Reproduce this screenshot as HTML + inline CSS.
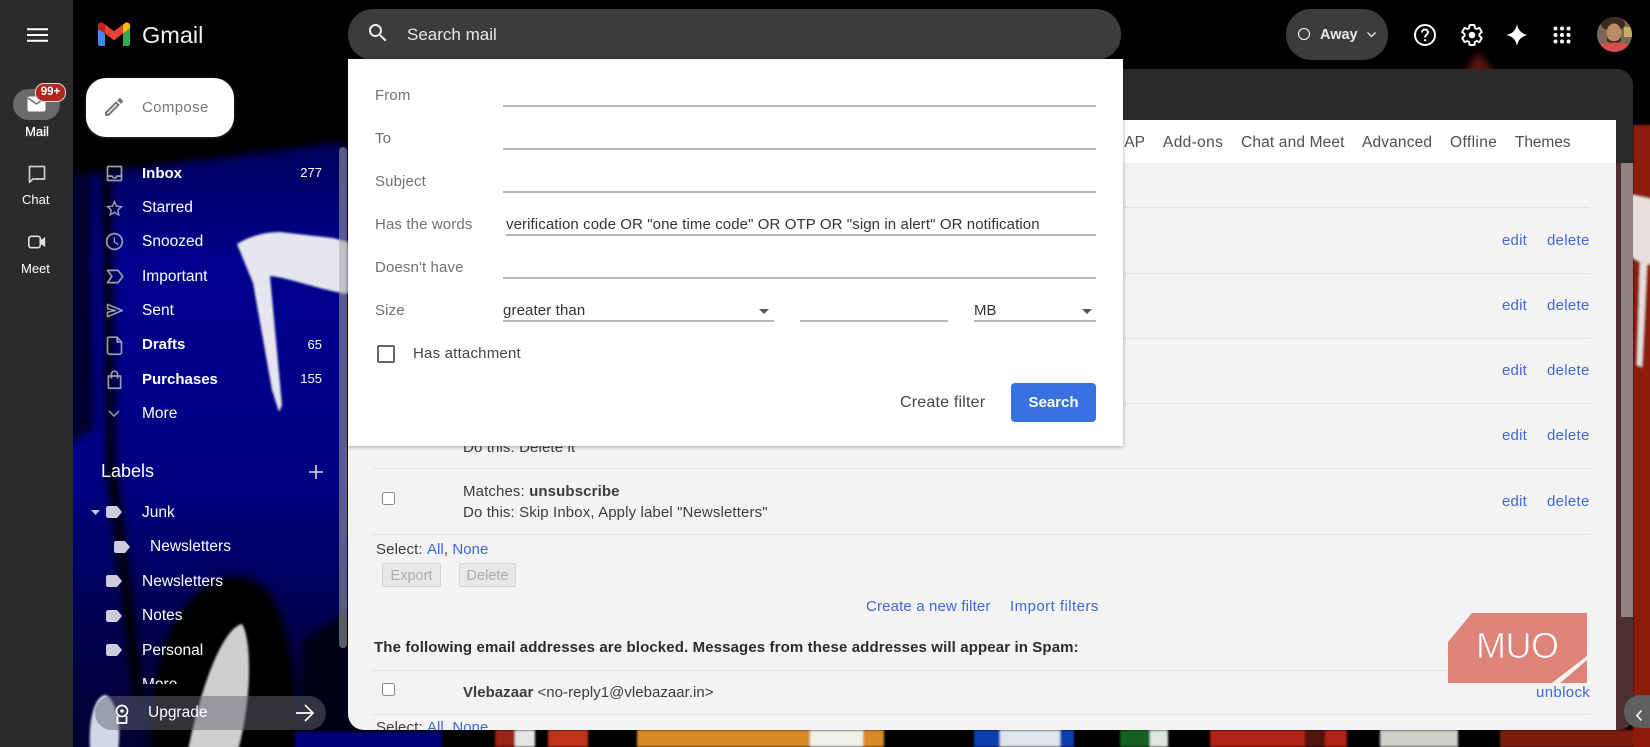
<!DOCTYPE html>
<html>
<head>
<meta charset="utf-8">
<title>Gmail</title>
<style>
html,body{margin:0;padding:0;background:#000;}
body{width:1650px;height:747px;overflow:hidden;position:relative;font-family:"Liberation Sans",sans-serif;font-size:15px;}
.a{position:absolute;}
.t{position:absolute;line-height:20px;height:20px;white-space:nowrap;}
.w{color:#fff;}
.b{font-weight:bold;}
.nav{color:#fff;font-size:15.5px;left:142px;}
.nav.b{font-size:15px;}
.cnt{color:#fff;font-size:13px;right:1328px;}
.lab{color:#727272;font-size:15px;left:375px;letter-spacing:.12px;}
.ln{position:absolute;height:2px;background:#b8b8b8;}
.rl{position:absolute;left:373px;width:1217px;height:1px;background:#e3e2e2;}
.lk{color:#3f67d5;font-size:15px;letter-spacing:.2px;}
.sl{letter-spacing:.05px;}
.tx{color:#3c3c3c;font-size:15px;letter-spacing:.12px;}
.tab{color:#4f4f4f;font-size:15.5px;top:133px;}
.cb{position:absolute;width:11px;height:11px;border:1.5px solid #888;border-radius:2.5px;background:#fff;}
.dis{position:absolute;height:22px;line-height:24px;background:#e9e8e8;border:1px solid #d4d4d4;border-radius:2px;color:#aaa;font-size:14.5px;text-align:center;}
svg.i{position:absolute;overflow:visible;}
</style>
</head>
<body>
<!-- wallpaper -->
<svg class="a" style="left:0;top:0" width="1650" height="747" viewBox="0 0 1650 747">
<defs>
<linearGradient id="bl" gradientUnits="userSpaceOnUse" x1="0" y1="145" x2="0" y2="747">
<stop offset="0" stop-color="#00005c"/><stop offset=".2" stop-color="#05058e"/><stop offset=".55" stop-color="#040484"/><stop offset=".8" stop-color="#020250"/><stop offset="1" stop-color="#010130"/>
</linearGradient>
<filter id="f4" filterUnits="userSpaceOnUse" x="0" y="0" width="1650" height="747"><feGaussianBlur stdDeviation="4"/></filter>
<filter id="f1" filterUnits="userSpaceOnUse" x="0" y="0" width="1650" height="747"><feGaussianBlur stdDeviation="1"/></filter>
</defs>
<rect width="1650" height="747" fill="#000"/>
<g filter="url(#f4)">
<path d="M60 178 L200 160 L335 143 L360 150 L360 700 L300 760 L60 760Z" fill="url(#bl)"/>
<path d="M60 178 L92 172 L95 430 L60 450Z" fill="#01012e"/>
<path d="M100 170 L113 170 L118 460 L146 700 L132 700 L104 470Z" fill="#000"/>
<path d="M150 760 C140 660 180 574 236 574 C290 574 298 660 300 760Z" fill="#000"/>
<path d="M300 640 L360 600 L360 760 L300 760Z" fill="#010118"/>
<path d="M1465 72 L1478 52 L1530 115 L1500 120Z" fill="#5a140c"/>
</g>
<g filter="url(#f1)">
<path d="M188 750 C200 690 222 628 242 624 C252 640 252 700 238 750Z" fill="#cfcfcf"/>
<path d="M90 750 C88 715 96 695 106 695 C116 700 122 725 118 750Z" fill="#cfd9e6"/>
<path d="M237 244 C250 236 265 232 280 232 L333 238 L348 242 L348 294 C320 290 290 278 270 276 L282 405 L279 412 L272 390 L253 283 Z" fill="#e6e6ee"/>
<rect x="295" y="732" width="147" height="16" fill="#03037a"/>
<rect x="495" y="730" width="20" height="17" fill="#9a2018"/>
<rect x="515" y="730" width="20" height="17" fill="#e5e5e5"/>
<rect x="548" y="730" width="40" height="17" fill="#c03018"/>
<rect x="637" y="730" width="247" height="17" fill="#d98a25"/>
<rect x="810" y="730" width="53" height="17" fill="#f0f0e8"/>
<rect x="974" y="730" width="26" height="17" fill="#1040b0"/>
<rect x="1000" y="730" width="60" height="17" fill="#dfe6ee"/>
<rect x="1060" y="730" width="14" height="17" fill="#1040b0"/>
<rect x="1120" y="730" width="30" height="17" fill="#156020"/>
<rect x="1150" y="730" width="18" height="17" fill="#dde8dd"/>
<rect x="1210" y="730" width="137" height="17" fill="#b02415"/>
<rect x="1305" y="730" width="20" height="17" fill="#501510"/>
<rect x="1380" y="730" width="78" height="17" fill="#cfcfc8"/>
<rect x="1500" y="730" width="150" height="17" fill="#7d1a10"/>
<path d="M1633 125H1655V752H1633Z" fill="#8e1b10"/>
<path d="M1600 192 C1620 192 1640 196 1655 200 L1655 262 L1647 265 L1642 367 L1637 365 L1640 262 L1600 240Z" fill="#e6dfdc"/>
</g>
</svg>

<!-- left rail -->
<div class="a" style="left:0;top:0;width:73px;height:747px;background:#2b2b2b"></div>
<svg class="i" style="left:27px;top:28px" width="21" height="14"><path d="M0 1.2H21M0 7H21M0 12.8H21" stroke="#fff" stroke-width="2"/></svg>
<div class="a" style="left:13px;top:89px;width:47px;height:31px;border-radius:16px;background:#6a6a6a"></div>
<svg class="i" style="left:27px;top:96px" width="20" height="16" viewBox="0 0 20 16"><rect x="0.5" y="0.5" width="18" height="15" rx="2" fill="#fff"/><path d="M1 2l8.5 6L18 2" fill="none" stroke="#6a6a6a" stroke-width="1.5"/></svg>
<div class="a" style="left:35px;top:83px;width:29px;height:17px;line-height:17px;border-radius:9px;background:#b3261e;border:1px solid #ddd;color:#fff;font-size:11.5px;font-weight:bold;text-align:center">99+</div>
<div class="t w" style="left:24px;top:122px;font-size:13px;width:26px;text-align:center;-webkit-text-stroke:.3px #fff">Mail</div>
<svg class="i" style="left:27px;top:164px" width="20" height="20" viewBox="0 0 24 24"><path d="M3 3H21V18H7L3 22Z" fill="none" stroke="#d0d0d0" stroke-width="2" stroke-linejoin="round"/></svg>
<div class="t w" style="left:22px;top:190px;font-size:13px">Chat</div>
<svg class="i" style="left:27px;top:233px" width="20" height="18" viewBox="0 0 24 22"><rect x="2" y="4" width="14" height="14" rx="3" fill="none" stroke="#e0e0e0" stroke-width="2"/><path d="M16 9l6-4V17l-6-4Z" fill="#e0e0e0"/></svg>
<div class="t w" style="left:21px;top:259px;font-size:13px">Meet</div>

<!-- logo -->
<svg class="i" style="left:98px;top:22px" width="32" height="24" viewBox="0 0 32 24">
<path d="M2 24h5V11.5L0 6.5V22c0 1.1.9 2 2 2z" fill="#4285f4"/>
<path d="M25 24h5c1.1 0 2-.9 2-2V6.5l-7 5z" fill="#34a853"/>
<path d="M25 2.5V11.5l7-5V3.5c0-2.6-3-4-5-2.5z" fill="#fbbc04"/>
<path d="M7 11.5V2.5l9 6.75 9-6.75v9l-9 6.75z" fill="#ea4335"/>
<path d="M0 3.5v3l7 5V2.5L5 1C3 -.5 0 .9 0 3.5z" fill="#c5221f"/>
</svg>
<div class="t" style="left:142px;top:23px;font-size:23.5px;line-height:24px;height:24px;color:#f1f1f1">Gmail</div>

<!-- compose -->
<div class="a" style="left:86px;top:78px;width:148px;height:59px;background:#fff;border-radius:20px;box-shadow:0 1px 3px rgba(255,255,255,.2)"></div>
<svg class="i" style="left:102px;top:95px" width="24" height="24" viewBox="0 0 24 24"><path d="M14.06 9.02l.92.92L5.92 19H5v-.92l9.06-9.06M17.66 3c-.25 0-.51.1-.7.29l-1.83 1.83 3.75 3.75 1.83-1.83c.39-.39.39-1.02 0-1.41l-2.34-2.34c-.2-.2-.45-.29-.71-.29zm-3.6 3.19L3 17.25V21h3.75L17.81 9.94l-3.75-3.75z" fill="#777"/></svg>
<div class="t" style="left:142px;top:98px;font-size:15px;color:#777;letter-spacing:.35px">Compose</div>

<!-- nav -->
<svg class="i" style="left:103.5px;top:162.5px" width="21" height="21" viewBox="0 0 24 24"><path d="M19 3H5c-1.1 0-2 .9-2 2v14c0 1.1.9 2 2 2h14c1.1 0 2-.9 2-2V5c0-1.1-.9-2-2-2zm0 16H5v-3h3.56c.69 1.19 1.97 2 3.45 2s2.75-.81 3.45-2H19v3zm0-5h-4.99c0 1.1-.9 2-2 2s-2-.9-2-2H5V5h14v9z" fill="#9c9ca8"/></svg>
<svg class="i" style="left:103.5px;top:198px" width="21" height="21" viewBox="0 0 24 24"><path d="M22 9.24l-7.19-.62L12 2 9.19 8.63 2 9.24l5.46 4.73L5.82 21 12 17.27 18.18 21l-1.63-7.03L22 9.24zM12 15.4l-3.76 2.27 1-4.28-3.32-2.88 4.38-.38L12 6.1l1.71 4.04 4.38.38-3.32 2.88 1 4.28L12 15.4z" fill="#9c9ca8"/></svg>
<svg class="i" style="left:103.5px;top:231px" width="21" height="21" viewBox="0 0 24 24"><path d="M11.99 2C6.47 2 2 6.48 2 12s4.47 10 9.99 10C17.52 22 22 17.52 22 12S17.52 2 11.99 2zM12 20c-4.42 0-8-3.58-8-8s3.58-8 8-8 8 3.58 8 8-3.58 8-8 8zm.5-13H11v6l5.25 3.15.75-1.23-4.5-2.67z" fill="#9c9ca8"/></svg>
<svg class="i" style="left:103.5px;top:266px" width="21" height="21" viewBox="0 0 24 24"><path d="M4 5H16L21.5 12 16 19H4L9 12Z" fill="none" stroke="#9c9ca8" stroke-width="2" stroke-linejoin="round"/></svg>
<svg class="i" style="left:103.5px;top:300px" width="21" height="21" viewBox="0 0 24 24"><path d="M4 5L21 12 4 19V14L13 12 4 10Z" fill="none" stroke="#9c9ca8" stroke-width="1.8" stroke-linejoin="round"/></svg>
<svg class="i" style="left:103.5px;top:335px" width="21" height="21" viewBox="0 0 24 24"><path d="M6 2.5H15L20 8V20C20 21 19 22 18 22H6C5 22 4 21 4 20V4C4 3 5 2.5 6 2.5Z M15 2.5V8H20" fill="none" stroke="#9c9ca8" stroke-width="1.9"/></svg>
<svg class="i" style="left:103.5px;top:369px" width="21" height="21" viewBox="0 0 24 24"><path d="M5 8H19V22H5Z M8.5 11V6A3.5 3.5 0 0 1 15.5 6V11" fill="none" stroke="#9c9ca8" stroke-width="1.9" stroke-linejoin="round"/></svg>
<svg class="i" style="left:108px;top:410px" width="12" height="8"><path d="M1 1L6 6L11 1" fill="none" stroke="#9c9ca8" stroke-width="1.5"/></svg>

<div class="t nav b" style="top:164px">Inbox</div><div class="t cnt" style="top:163px">277</div>
<div class="t nav" style="top:198px">Starred</div>
<div class="t nav" style="top:232px">Snoozed</div>
<div class="t nav" style="top:267px">Important</div>
<div class="t nav" style="top:301px">Sent</div>
<div class="t nav b" style="top:335px">Drafts</div><div class="t cnt" style="top:335px">65</div>
<div class="t nav b" style="top:370px">Purchases</div><div class="t cnt" style="top:369px">155</div>
<div class="t nav" style="top:404px">More</div>
<div class="t w" style="left:101px;top:461px;font-size:18px">Labels</div>
<svg class="i" style="left:309px;top:465px" width="14" height="14"><path d="M7 0V14M0 7H14" stroke="#ddd" stroke-width="1.6"/></svg>

<svg class="i" style="left:91px;top:510px" width="10" height="5"><path d="M0 0H9L4.5 5Z" fill="#c8c8d8"/></svg>
<svg class="i" style="left:106px;top:506px" width="16" height="12"><path d="M2 0H11L16 6L11 12H2C1 12 0 11 0 10V2C0 1 1 0 2 0Z" fill="#cdcddd"/></svg>
<svg class="i" style="left:114px;top:541px" width="16" height="12"><path d="M2 0H11L16 6L11 12H2C1 12 0 11 0 10V2C0 1 1 0 2 0Z" fill="#cdcddd"/></svg>
<svg class="i" style="left:106px;top:575px" width="16" height="12"><path d="M2 0H11L16 6L11 12H2C1 12 0 11 0 10V2C0 1 1 0 2 0Z" fill="#cdcddd"/></svg>
<svg class="i" style="left:106px;top:610px" width="16" height="12"><path d="M2 0H11L16 6L11 12H2C1 12 0 11 0 10V2C0 1 1 0 2 0Z" fill="#cdcddd"/></svg>
<svg class="i" style="left:106px;top:644px" width="16" height="12"><path d="M2 0H11L16 6L11 12H2C1 12 0 11 0 10V2C0 1 1 0 2 0Z" fill="#cdcddd"/></svg>

<div class="t nav" style="top:503px">Junk</div>
<div class="t nav" style="left:150px;top:537px">Newsletters</div>
<div class="t nav" style="top:572px">Newsletters</div>
<div class="t nav" style="top:606px">Notes</div>
<div class="t nav" style="top:641px">Personal</div>
<div class="a" style="left:100px;top:670px;width:240px;height:14px;overflow:hidden"><div class="t nav" style="left:42px;top:5px">More</div></div>

<div class="a" style="left:95px;top:696px;width:231px;height:34px;border-radius:17px;background:rgba(100,100,112,.5)"></div>
<svg class="i" style="left:114px;top:704px" width="16" height="20" viewBox="0 0 16 20"><circle cx="8" cy="7" r="5.5" fill="none" stroke="#fff" stroke-width="1.7"/><circle cx="8" cy="7" r="1.8" fill="#fff"/><path d="M3.5 12V19H12.5V12" fill="none" stroke="#fff" stroke-width="1.7"/></svg>
<div class="t w" style="left:148px;top:703px;font-size:15.5px">Upgrade</div>
<svg class="i" style="left:296px;top:704px" width="18" height="18"><path d="M0 9H17M9 1L17 9L9 17" fill="none" stroke="#fff" stroke-width="1.7"/></svg>

<div class="a" style="left:339px;top:147px;width:8px;height:501px;border-radius:4px;background:rgba(165,165,165,.55)"></div>

<!-- main panel -->
<div class="a" style="left:348px;top:69px;width:1285px;height:661px;border-radius:16px;background:rgba(43,43,43,.97)"></div>
<div class="a" style="left:1616px;top:163px;width:17px;height:554px;background:#4d2f2d"></div>
<div class="a" style="left:1616px;top:710px;width:17px;height:20px;background:#4d2f2d;border-radius:0 0 14px 0"></div>
<div class="a" style="left:1621px;top:163px;width:12px;height:454px;background:#8f8280"></div>
<div class="a" style="left:348px;top:120px;width:1268px;height:43px;background:#fff"></div>
<div class="a" style="left:348px;top:163px;width:1268px;height:567px;background:#f4f3f3;border-radius:0 0 0 16px;overflow:hidden">
  <div class="t tx sl" style="left:28px;top:555px">Select: <span class="lk sl">All</span>, <span class="lk sl">None</span></div>
</div>

<!-- tabs -->
<div class="t tab" style="left:1120px">IAP</div>
<div class="t tab" style="left:1163px;letter-spacing:.35px">Add-ons</div>
<div class="t tab" style="left:1241px;letter-spacing:.15px">Chat and Meet</div>
<div class="t tab" style="left:1362px;letter-spacing:.15px">Advanced</div>
<div class="t tab" style="left:1450px;letter-spacing:.4px">Offline</div>
<div class="t tab" style="left:1515px;letter-spacing:-.1px">Themes</div>

<!-- rows -->
<div class="rl" style="top:207px"></div>
<div class="rl" style="top:273px"></div>
<div class="rl" style="top:338px"></div>
<div class="rl" style="top:403px"></div>
<div class="rl" style="top:468px"></div>
<div class="rl" style="top:534px"></div>
<div class="rl" style="top:670px"></div>
<div class="rl" style="top:714px"></div>

<div class="t lk" style="left:1502px;top:231px">edit</div><div class="t lk" style="left:1547px;top:231px;letter-spacing:.3px">delete</div>
<div class="t lk" style="left:1502px;top:296px">edit</div><div class="t lk" style="left:1547px;top:296px;letter-spacing:.3px">delete</div>
<div class="t lk" style="left:1502px;top:361px">edit</div><div class="t lk" style="left:1547px;top:361px;letter-spacing:.3px">delete</div>
<div class="t lk" style="left:1502px;top:426px">edit</div><div class="t lk" style="left:1547px;top:426px;letter-spacing:.3px">delete</div>
<div class="t lk" style="left:1502px;top:492px">edit</div><div class="t lk" style="left:1547px;top:492px;letter-spacing:.3px">delete</div>

<div class="t tx" style="left:463px;top:438px">Do this: Delete it</div>
<div class="cb" style="left:382px;top:492px"></div>
<div class="t tx" style="left:463px;top:482px">Matches: <b>unsubscribe</b></div>
<div class="t tx" style="left:463px;top:503px">Do this: Skip Inbox, Apply label "Newsletters"</div>
<div class="t tx sl" style="left:376px;top:540px">Select: <span class="lk sl">All</span>, <span class="lk sl">None</span></div>
<div class="dis" style="left:382px;top:563px;width:57px">Export</div>
<div class="dis" style="left:459px;top:563px;width:55px">Delete</div>
<div class="t lk" style="left:866px;top:597px;letter-spacing:.15px">Create a new filter</div>
<div class="t lk" style="left:1010px;top:597px;letter-spacing:.45px">Import filters</div>
<div class="t b" style="left:374px;top:638px;font-size:15px;color:#2c2c2c;letter-spacing:.12px">The following email addresses are blocked. Messages from these addresses will appear in Spam:</div>
<div class="cb" style="left:382px;top:683px"></div>
<div class="t tx" style="left:463px;top:683px;letter-spacing:.03px"><b>Vlebazaar</b> &lt;no-reply1@vlebazaar.in&gt;</div>
<div class="t lk" style="left:1536px;top:683px;letter-spacing:.35px">unblock</div>

<!-- MUO watermark -->
<svg class="i" style="left:1448px;top:613px" width="140" height="71" viewBox="0 0 140 71">
<path d="M24 0H139V43L104 70H0V29Z" fill="#dd8379"/>
<path d="M139 47V70H112Z" fill="#dd8379"/>
<path d="M139 43V47L112 70H104Z" fill="#f4f3f3"/>
</svg>
<div class="t" style="left:1476px;top:628px;height:36px;line-height:36px;font-size:36px;color:#fff;letter-spacing:-.5px;-webkit-text-stroke:.8px #dd8379">MUO</div>

<!-- toggle -->
<div class="a" style="left:1624px;top:695px;width:30px;height:33px;border-radius:16px 0 0 16px;background:#5f5f5f"></div>
<svg class="i" style="left:1636px;top:710px" width="6" height="11"><path d="M5.5 .5L1 5.5L5.5 10.5" fill="none" stroke="#fff" stroke-width="1.6"/></svg>

<!-- top bar -->
<div class="a" style="left:348px;top:9px;width:773px;height:51px;border-radius:25px;background:#3c3c3c"></div>
<svg class="i" style="left:366px;top:21px" width="24" height="24" viewBox="0 0 24 24"><path d="M15.5 14h-.79l-.28-.27A6.47 6.47 0 0 0 16 9.5 6.5 6.5 0 1 0 9.5 16c1.61 0 3.09-.59 4.23-1.57l.27.28v.79l5 4.99L20.49 19l-4.99-5zm-6 0C7.01 14 5 11.99 5 9.5S7.01 5 9.5 5 14 7.01 14 9.5 11.99 14 9.5 14z" fill="#f0f0f0"/></svg>
<div class="t" style="left:407px;top:25px;font-size:17px;color:#e8e8e8">Search mail</div>

<div class="a" style="left:1286px;top:9px;width:102px;height:51px;border-radius:25px;background:#3c3c3c"></div>
<div class="a" style="left:1298px;top:28px;width:10px;height:10px;border:1.8px solid #fff;border-radius:50%"></div>
<div class="t b" style="left:1320px;top:25px;font-size:14.5px;color:#e8e8e8">Away</div>
<svg class="i" style="left:1367px;top:32px" width="9" height="6"><path d="M0.5 0.5L4.5 4.5L8.5 0.5" fill="none" stroke="#eee" stroke-width="1.3"/></svg>

<svg class="i" style="left:1413px;top:23px" width="24" height="24" viewBox="0 0 24 24"><circle cx="12" cy="12" r="10" fill="none" stroke="#fff" stroke-width="2"/><path d="M9 9.5C9 7.5 10.5 6.5 12 6.5S15 7.5 15 9.5C15 11.5 12 11.8 12 14.5" fill="none" stroke="#fff" stroke-width="1.9"/><circle cx="12" cy="17.3" r="1.2" fill="#fff"/></svg>
<svg class="i" style="left:1460px;top:23px" width="24" height="24" viewBox="0 0 24 24"><path d="M19.43 12.98c.04-.32.07-.64.07-.98s-.03-.66-.07-.98l2.11-1.65c.19-.15.24-.42.12-.64l-2-3.46c-.12-.22-.39-.3-.61-.22l-2.49 1c-.52-.4-1.08-.73-1.69-.98l-.38-2.65C14.46 2.18 14.25 2 14 2h-4c-.25 0-.46.18-.49.42l-.38 2.65c-.61.25-1.17.59-1.69.98l-2.49-1c-.23-.09-.49 0-.61.22l-2 3.46c-.13.22-.07.49.12.64l2.11 1.65c-.04.32-.07.65-.07.98s.03.66.07.98l-2.11 1.65c-.19.15-.24.42-.12.64l2 3.46c.12.22.39.3.61.22l2.49-1c.52.4 1.08.73 1.69.98l.38 2.65c.03.24.24.42.49.42h4c.25 0 .46-.18.49-.42l.38-2.65c.61-.25 1.17-.59 1.69-.98l2.49 1c.23.09.49 0 .61-.22l2-3.46c.12-.22.07-.49-.12-.64l-2.11-1.65z" fill="none" stroke="#fff" stroke-width="1.9"/><circle cx="12" cy="12" r="3.3" fill="#fff"/></svg>
<svg class="i" style="left:1505px;top:23px" width="24" height="24" viewBox="0 0 24 24"><path d="M12 1C12.8 7 17 11.2 23 12 17 12.8 12.8 17 12 23 11.2 17 7 12.8 1 12 7 11.2 11.2 7 12 1Z" fill="#fff"/></svg>
<svg class="i" style="left:1553px;top:26px" width="18" height="18" viewBox="0 0 18 18" fill="#fff"><circle cx="2.5" cy="2.5" r="2"/><circle cx="9" cy="2.5" r="2"/><circle cx="15.5" cy="2.5" r="2"/><circle cx="2.5" cy="9" r="2"/><circle cx="9" cy="9" r="2"/><circle cx="15.5" cy="9" r="2"/><circle cx="2.5" cy="15.5" r="2"/><circle cx="9" cy="15.5" r="2"/><circle cx="15.5" cy="15.5" r="2"/></svg>
<svg class="i" style="left:1597px;top:17px" width="35" height="35" viewBox="0 0 35 35">
<defs><clipPath id="av"><circle cx="17.5" cy="17.5" r="17.5"/></clipPath></defs>
<g clip-path="url(#av)"><rect width="35" height="35" fill="#7a6a55"/><rect x="27" y="10" width="8" height="10" fill="#c9ac68"/><ellipse cx="16" cy="7" rx="12" ry="7" fill="#3a2a20"/><ellipse cx="17" cy="16" rx="7.5" ry="9.5" fill="#bd8a65"/><path d="M10 19C12 26 22 26 24 19L24 24C20 28 14 28 10 24Z" fill="#3a2a20"/><path d="M0 35L4 27C10 25 24 25 31 27L35 35Z" fill="#d2504e"/></g></svg>

<!-- search dropdown -->
<div class="a" style="left:348px;top:58.5px;width:774.5px;height:387.5px;background:#fff;box-shadow:0 1px 4px rgba(0,0,0,.35)"></div>
<div class="t lab" style="top:86px">From</div>
<div class="ln" style="left:503px;top:105px;width:593px"></div>
<div class="t lab" style="top:129px">To</div>
<div class="ln" style="left:503px;top:148px;width:593px"></div>
<div class="t lab" style="top:172px">Subject</div>
<div class="ln" style="left:503px;top:191px;width:593px"></div>
<div class="t lab" style="top:215px">Has the words</div>
<div class="t" style="left:506px;top:215px;font-size:15px;color:#333;letter-spacing:.095px">verification code OR "one time code" OR OTP OR "sign in alert" OR notification</div>
<div class="ln" style="left:506px;top:234px;width:590px"></div>
<div class="t lab" style="top:258px">Doesn't have</div>
<div class="ln" style="left:503px;top:277px;width:593px"></div>
<div class="t lab" style="top:301px">Size</div>
<div class="t" style="left:503px;top:301px;font-size:15px;color:#333;letter-spacing:.12px">greater than</div>
<div class="ln" style="left:503px;top:320px;width:271px"></div>
<svg class="i" style="left:759px;top:309px" width="10" height="5"><path d="M0 0H10L5 5Z" fill="#555"/></svg>
<div class="ln" style="left:800px;top:320px;width:148px"></div>
<div class="t" style="left:974px;top:301px;font-size:15px;color:#333">MB</div>
<div class="ln" style="left:974px;top:320px;width:122px"></div>
<svg class="i" style="left:1082px;top:309px" width="10" height="5"><path d="M0 0H10L5 5Z" fill="#555"/></svg>
<div class="a" style="left:377px;top:345px;width:14px;height:14px;border:2px solid #666;border-radius:2px"></div>
<div class="t" style="left:413px;top:344px;font-size:15px;color:#444;letter-spacing:.2px">Has attachment</div>
<div class="t" style="left:900px;top:393px;font-size:16px;color:#444;letter-spacing:.2px">Create filter</div>
<div class="a b" style="left:1011px;top:383px;width:85px;height:39px;line-height:39px;text-align:center;background:#3871e0;border-radius:4px;color:#fff;font-size:15px">Search</div>
</body>
</html>
